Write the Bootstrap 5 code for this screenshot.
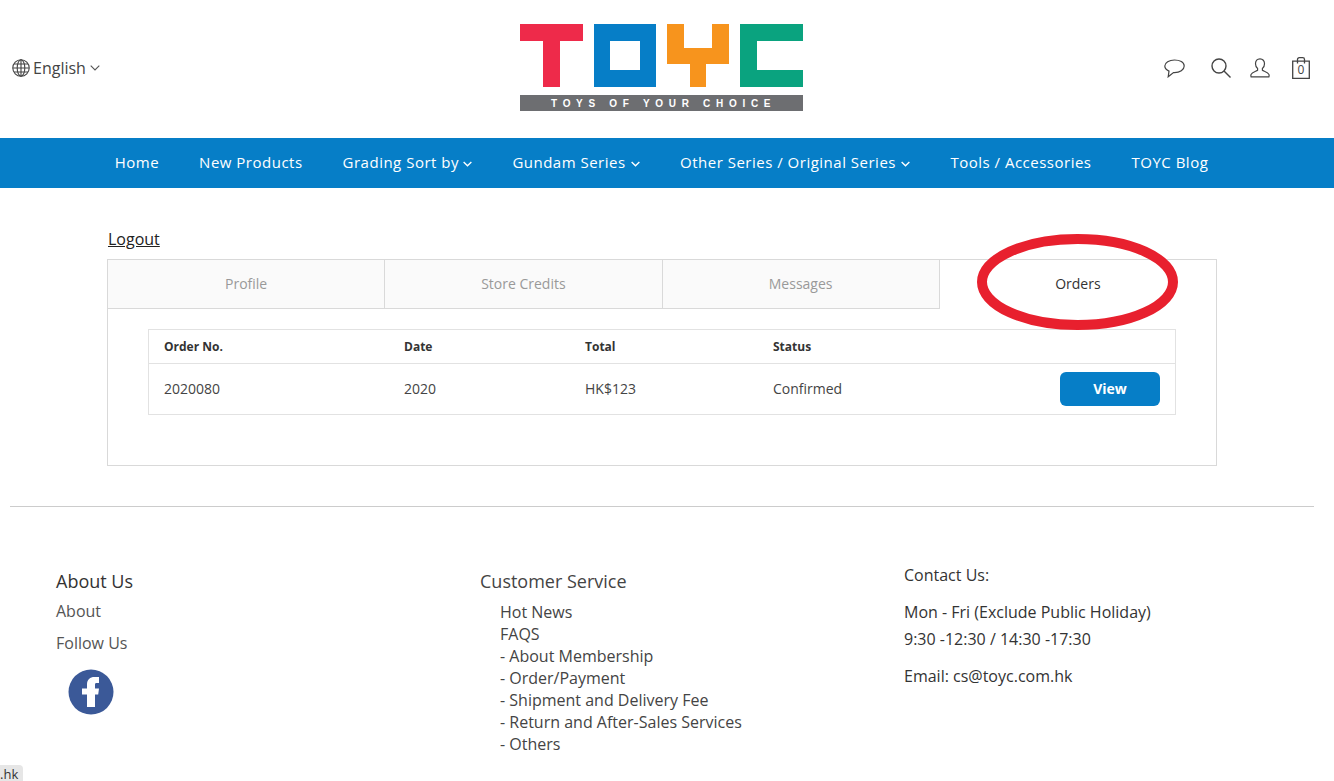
<!DOCTYPE html>
<html lang="en">
  <head>
    <meta charset="UTF-8" />
    <meta name="viewport" content="width=device-width, initial-scale=1.0" />
    <title>TOYC</title>
    <link href="https://cdn.jsdelivr.net/npm/bootstrap@5.3.0/dist/css/bootstrap.min.css" rel="stylesheet" />
    <style>
      body {
        font-family: "Open Sans", sans-serif;
        color: #444;
        font-size: 16px;
        height: 781px;
        overflow: hidden;
        position: relative;
      }
      .top-head {
        height: 138px;
        padding: 0 24px 0 12px;
      }
      .lang-pick {
        width: 200px;
        margin-top: -2px;
        gap: 3px;
      }
      .lang-pick .chev {
        margin-left: 1px;
      }
      .head-icons {
        width: 198px;
        margin-top: -2px;
      }
      .head-icons .to-search { margin-left: 26px; }
      .head-icons .to-user { margin-left: 19px; }
      .head-icons .to-bag { margin-left: 22px; }
      .logo-art {
        margin-top: -2px;
      }
      .logo-word {
        font-family: "Liberation Sans", sans-serif;
        font-weight: 700;
        font-size: 10px;
        letter-spacing: 5.7px;
        fill: #fff;
      }
      .main-bar {
        height: 50px;
        background: #067ec7;
        gap: 40px;
        padding: 0 11px 2px 0;
      }
      .main-bar a {
        color: #fff;
        font-size: 15px;
        font-weight: 500;
        letter-spacing: .5px;
        text-decoration: none;
      }
      .main-bar .wide-chev {
        margin-left: 1px;
      }
      .acct-wrap {
        width: 1110px;
        margin: 39px 0 0 107px;
      }
      .logout-link {
        color: #222;
        line-height: 24px;
        display: block;
        height: 33px;
        padding-left: 1px;
      }
      .acct-box {
        border: 1px solid #d9d9d9;
        height: 207px;
        margin-top: -1px;
      }
      .acct-tabs a {
        flex: 1 1 0;
        height: 49px;
        line-height: 47px;
        text-align: center;
        font-size: 14px;
        color: #999;
        background: #fafafa;
        border-right: 1px solid #d9d9d9;
        border-bottom: 1px solid #d9d9d9;
        text-decoration: none;
      }
      .acct-tabs a.on {
        background: #fff;
        color: #333;
        border: 0;
      }
      .order-table {
        width: 1028px;
        margin: 20px 0 0 40px;
        border: 1px solid #e2e2e2;
        font-size: 14px;
      }
      .order-head {
        height: 34px;
        border-bottom: 1px solid #e2e2e2;
        font-size: 12px;
        font-weight: 700;
        color: #333;
      }
      .order-row {
        height: 50px;
      }
      .order-row > div {
        padding-bottom: 2px;
      }
      .col-no { width: 255px; padding-left: 15px; }
      .col-date { width: 181px; }
      .col-total { width: 188px; }
      .view-btn {
        background: #067ec7;
        color: #fff;
        border: 0;
        width: 100px;
        height: 34px;
        padding: 0 0 2px;
        font-size: 14px;
        font-weight: 700;
        margin-right: 15px;
      }
      .foot-line {
        margin: 40px 20px 0 10px;
        border-top: 1px solid #ccc;
        opacity: 1;
      }
      .foot-cols {
        display: grid;
        grid-template-columns: 424px 424px 424px;
        padding: 0 0 0 56px;
        margin-top: 56px;
      }
      .foot-title {
        font-size: 18px;
        line-height: 25px;
        color: #333;
        margin: 6px 0 1px;
      }
      .foot-title.soft {
        color: #444;
        margin-bottom: 5px;
      }
      .foot-item {
        line-height: 32px;
        color: #555;
        display: block;
        text-decoration: none;
      }
      .help-list {
        padding-left: 20px;
        margin-top: 7px;
        line-height: 22px;
        color: #444;
      }
      .contact-list {
        margin-top: -1px;
      }
      .contact-line {
        color: #333;
        line-height: 27px;
      }
      .contact-line.spaced {
        margin-bottom: 10px;
      }
      .fb-mark {
        margin: 10px 0 0 12px;
        display: block;
      }
      .ring-mark {
        position: absolute;
        left: 977px;
        top: 234px;
      }
      .url-chip {
        position: absolute;
        left: 0;
        bottom: 0;
        height: 16px;
        width: 23px;
        background: #e6e6e6;
        border-top-right-radius: 4px;
        font-size: 13px;
        line-height: 19px;
        color: #333;
        text-align: right;
        padding-right: 6px;
      }
    </style>
  </head>

  <body>
    <header class="top-head d-flex align-items-center justify-content-between">
      <div class="lang-pick d-flex align-items-center">
        <svg width="18" height="18" viewBox="0 0 18 18" fill="none" stroke="#444" stroke-width="1.1">
          <circle cx="9" cy="9" r="8.2" />
          <ellipse cx="9" cy="9" rx="3.8" ry="8.2" />
          <path d="M9 .8V17.2M.8 9H17.2M2 5H16M2 13H16" />
        </svg>
        <span>English</span>
        <svg class="chev" width="10" height="6" viewBox="0 0 10 6" fill="none" stroke="#555" stroke-width="1.1"><path d="M.7.7 5 5 9.3.7" /></svg>
      </div>
      <svg class="logo-art flex-shrink-0" width="284" height="88" viewBox="520 24 284 88">
        <path fill="#ee2a4a" d="M520 24H583V41H560V87H543V41H520Z" />
        <path fill="#067ec7" fill-rule="evenodd" d="M594 24H656V87H594ZM610 41V70H640V41Z" />
        <path fill="#f7941d" d="M667 24H684V48H712V24H729V64H706V87H690V64H667Z" />
        <path fill="#0aa37f" d="M740 24H803V41H757V70H803V87H740Z" />
        <rect x="520" y="95" width="283" height="16" fill="#6d6e71" />
        <text class="logo-word" x="551" y="107">TOYS OF YOUR CHOICE</text>
      </svg>
      <div class="head-icons d-flex align-items-center justify-content-end">
        <svg width="21" height="19" viewBox="0 0 21 19" fill="none" stroke="#444" stroke-width="1.2">
          <path d="M10.500 1C5.200 1 .8 3.600 .8 7c0 2.200 1.800 4 4.200 5.100L4.200 17.800 9.500 13.600c.4 0 .7.1 1 .1 5.300 0 9.700-2.900 9.700-6.700S15.800 1 10.500 1Z" />
        </svg>
        <svg class="to-search" width="20" height="20" viewBox="0 0 20 20" fill="none" stroke="#444" stroke-width="1.4">
          <circle cx="8" cy="8" r="7" />
          <path d="M13 13 19.500 19.500" />
        </svg>
        <svg class="to-user" width="20" height="20" viewBox="0 0 20 20" fill="none" stroke="#444" stroke-width="1.2">
          <path d="M10 .8C7.200 .8 5.500 3 5.500 5.700c0 2 .8 3.700 2.100 4.800v1.800c-1.400 1-5.600 1.600-6.500 4.100-.3.800-.2 1.900 0 2.400h17.800c.2-.5.300-1.600 0-2.400-.9-2.500-5.100-3.100-6.500-4.100v-1.800c1.300-1.100 2.100-2.800 2.100-4.800C14.500 3 12.800 .8 10 .8Z" />
        </svg>
        <svg class="to-bag" width="18" height="22" viewBox="0 0 18 22">
          <path fill="none" stroke="#444" stroke-width="1.300" d="M.7 4.200H17.300V21.300H.7ZM5.500 6.500V2.500C5.500 1.400 6.200 .7 7.300 .7H10.700C11.800 .7 12.500 1.400 12.500 2.500V6.500" />
          <text x="9" y="17" text-anchor="middle" font-size="12" fill="#444" font-family="Open Sans, sans-serif">0</text>
        </svg>
      </div>
    </header>

    <nav class="main-bar d-flex align-items-center justify-content-center">
      <a href="#">Home</a>
      <a href="#">New Products</a>
      <a href="#">Grading Sort by <svg width="9" height="6" viewBox="0 0 10 6" fill="none" stroke="#fff" stroke-width="1.5"><path d="M.7.7 5 5 9.300.7" /></svg></a>
      <a href="#">Gundam Series <svg class="wide-chev" width="9" height="6" viewBox="0 0 10 6" fill="none" stroke="#fff" stroke-width="1.5"><path d="M.7.7 5 5 9.300.7" /></svg></a>
      <a href="#">Other Series / Original Series <svg class="wide-chev" width="9" height="6" viewBox="0 0 10 6" fill="none" stroke="#fff" stroke-width="1.5"><path d="M.7.7 5 5 9.300.7" /></svg></a>
      <a href="#">Tools / Accessories</a>
      <a href="#">TOYC Blog</a>
    </nav>

    <main class="acct-wrap">
      <a class="logout-link" href="#">Logout</a>
      <div class="acct-box">
        <div class="acct-tabs d-flex">
          <a href="#">Profile</a>
          <a href="#">Store Credits</a>
          <a href="#">Messages</a>
          <a href="#" class="on">Orders</a>
        </div>
        <div class="order-table">
          <div class="order-head d-flex align-items-center">
            <div class="col-no">Order No.</div>
            <div class="col-date">Date</div>
            <div class="col-total">Total</div>
            <div>Status</div>
          </div>
          <div class="order-row d-flex align-items-center">
            <div class="col-no">2020080</div>
            <div class="col-date">2020</div>
            <div class="col-total">HK$123</div>
            <div>Confirmed</div>
            <button type="button" class="btn view-btn ms-auto">View</button>
          </div>
        </div>
      </div>
    </main>

    <hr class="foot-line" />

    <footer class="foot-cols">
      <div>
        <div class="foot-title">About Us</div>
        <a class="foot-item" href="#">About</a>
        <a class="foot-item" href="#">Follow Us</a>
        <svg class="fb-mark" width="46" height="46" viewBox="0 0 46 46">
          <circle cx="23" cy="23" r="22.500" fill="#3b5998" />
          <path fill="#fff" d="M19 38V25.500H14V19.500H19V15.500C19 10.500 22 8 26.500 8H31V14H28.500C27.400 14 27 14.600 27 15.800V19.500H31L30.200 25.500H27V38Z" />
        </svg>
      </div>
      <div>
        <div class="foot-title soft">Customer Service</div>
        <div class="help-list">
          <div>Hot News</div>
          <div>FAQS</div>
          <div>- About Membership</div>
          <div>- Order/Payment</div>
          <div>- Shipment and Delivery Fee</div>
          <div>- Return and After-Sales Services</div>
          <div>- Others</div>
        </div>
      </div>
      <div class="contact-list">
        <div class="contact-line spaced">Contact Us:</div>
        <div class="contact-line">Mon - Fri (Exclude Public Holiday)</div>
        <div class="contact-line spaced">9:30 -12:30 / 14:30 -17:30</div>
        <div class="contact-line">Email: cs@toyc.com.hk</div>
      </div>
    </footer>

    <svg class="ring-mark" width="201" height="96" viewBox="0 0 201 96">
      <ellipse cx="100.500" cy="48" rx="95.500" ry="43" fill="none" stroke="#e8202e" stroke-width="10" />
    </svg>
    <div class="url-chip">.hk</div>

    <script src="https://cdn.jsdelivr.net/npm/bootstrap@5.3.0/dist/js/bootstrap.bundle.min.js"></script>
  </body>
</html>
